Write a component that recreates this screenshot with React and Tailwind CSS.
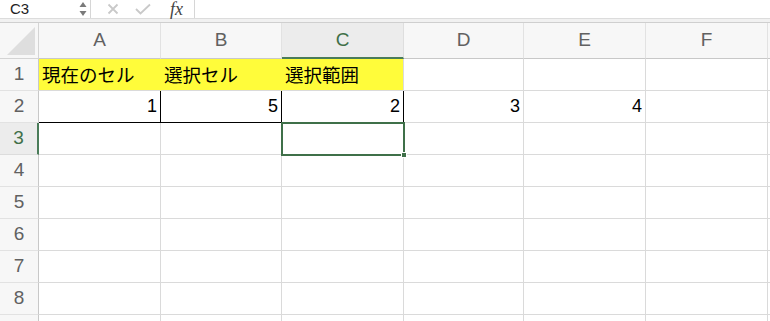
import React from 'react';

const cols = ['A', 'B', 'C', 'D', 'E', 'F'];
const colW = ['122px', '121px', '122px', '120px', '122px', '122px'];

const jp = { fontFamily: '"Noto Sans CJK JP", "Liberation Sans", sans-serif' };
const latin = { fontFamily: '"Liberation Sans", Arial, sans-serif' };

// row contents: [text, align, extra classes]
const rows = [
  [
    ['現在のセル', 'l', 'bg-[#fffc3a] border-r-[#fffc3a]'],
    ['選択セル', 'l', 'bg-[#fffc3a] border-r-[#fffc3a]'],
    ['選択範囲', 'l', 'bg-[#fffc3a]'],
    [], [], [],
  ],
  [
    ['1', 'r', 'border-r-black border-b-black'],
    ['5', 'r', 'border-r-black border-b-black'],
    ['2', 'r', 'border-r-black'],
    ['3', 'r', ''],
    ['4', 'r', ''],
    [],
  ],
  [[], [], [], [], [], []],
  [[], [], [], [], [], []],
  [[], [], [], [], [], []],
  [[], [], [], [], [], []],
  [[], [], [], [], [], []],
  [[], [], [], [], [], []],
];

function FormulaBar() {
  return (
    <div className="flex h-[19px] bg-white border-b border-[#dcdcdc]" style={latin}>
      <div className="w-[91px] flex items-center justify-between pl-[10px] pr-[3px] border-r border-[#d6d6d6]">
        <span className="text-[15px] text-[#222]">C3</span>
        <svg width="8" height="16" viewBox="0 0 8 16">
          <path d="M4 1 L7.5 6 L0.5 6 Z" fill="#7a7a7a" />
          <path d="M4 15 L7.5 10 L0.5 10 Z" fill="#7a7a7a" />
        </svg>
      </div>
      <div className="w-[104px] flex items-center pl-[16px] border-r border-[#d6d6d6]">
        <svg width="12" height="12" viewBox="0 0 12 12">
          <path d="M1.5 1.5 L10.5 10.5 M10.5 1.5 L1.5 10.5" stroke="#c9c9c9" strokeWidth="1.8" />
        </svg>
        <svg className="ml-[16px]" width="16" height="12" viewBox="0 0 16 12">
          <path d="M1 6 L5.5 10.5 L15 1.5" stroke="#c9c9c9" strokeWidth="1.8" fill="none" />
        </svg>
        <span className="ml-[19px] text-[18px] italic text-[#444] leading-none" style={{ fontFamily: '"Liberation Serif", serif' }}>fx</span>
      </div>
      <div className="flex-1" />
    </div>
  );
}

export default function App() {
  const template = `39px ${colW.join(' ')} 1fr`;
  return (
    <div className="w-[770px] h-[321px] overflow-hidden bg-white">
      <FormulaBar />
      <div className="h-[4px] bg-[#f1f1f1] border-b border-[#cfcfcf]" />

      <div className="relative">
        <div className="grid" style={{ gridTemplateColumns: template, gridTemplateRows: '36px repeat(9, 32px)' }}>
          {/* corner */}
          <div className="bg-[#f7f7f7] border-r border-b border-[#d4d4d4] flex items-end justify-end p-[3px]">
            <svg width="28" height="28" viewBox="0 0 28 28">
              <path d="M28 0 L28 28 L0 28 Z" fill="#dedede" />
            </svg>
          </div>
          {cols.map((c) => (
            <div
              key={c}
              className={
                c === 'C'
                  ? 'flex items-center justify-center bg-[#ececec] border-r border-[#dedede] border-b-2 border-b-[#4a7c59] text-[#3f7049] text-[19px]'
                  : 'flex items-center justify-center bg-[#f7f7f7] border-r border-[#e2e2e2] border-b border-b-[#c8c8c8] text-[#616161] text-[19px]'
              }
              style={latin}
            >
              {c}
            </div>
          ))}
          <div className="bg-[#f7f7f7] border-b border-[#c8c8c8]" />

          {rows.concat([[[], [], [], [], [], []]]).map((r, i) => (
            <React.Fragment key={i}>
              <div
                className={
                  i === 2
                    ? 'flex items-center justify-center bg-[#ececec] border-r-2 border-r-[#4a7c59] border-b border-b-[#dcdcdc] text-[#3f7049] text-[19px]'
                    : 'flex items-center justify-center bg-[#f7f7f7] border-r border-r-[#c8c8c8] border-b border-b-[#e2e2e2] text-[#616161] text-[19px]'
                }
                style={latin}
              >
                {i < 8 ? i + 1 : ''}
              </div>
              {r.map((cell, j) => {
                const [text, align, extra] = cell;
                return (
                  <div
                    key={j}
                    className={`flex items-center border-r border-b border-[#dadada] ${align === 'r' ? 'justify-end pr-[3px] text-[18px]' : 'pl-[3px] text-[18.5px]'} text-black ${extra || ''}`}
                    style={align === 'r' ? latin : jp}
                  >
                    {text}
                  </div>
                );
              })}
              <div className="border-b border-[#dadada]" />
            </React.Fragment>
          ))}
        </div>

        {/* active cell C3 */}
        <div className="absolute left-[281px] top-[99px] w-[124px] h-[34px] border-2 border-[#3f7049] pointer-events-none">
          <div className="absolute -right-[4px] -bottom-[4px] w-[6px] h-[6px] bg-[#3f7049] border border-white" />
        </div>
      </div>
    </div>
  );
}
